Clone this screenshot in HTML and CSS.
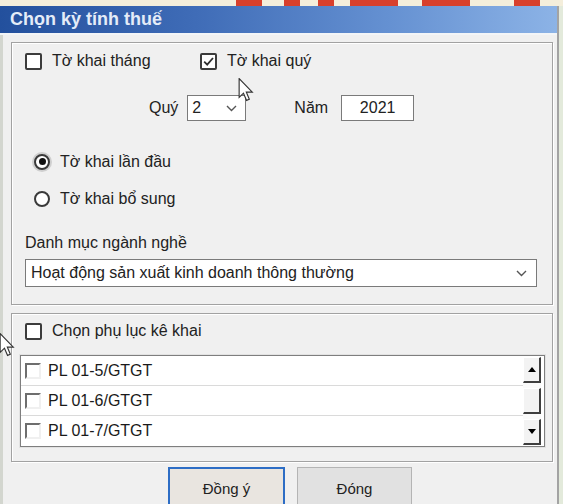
FILE: index.html
```html
<!DOCTYPE html>
<html lang="vi">
<head>
<meta charset="utf-8">
<title>Chọn kỳ tính thuế</title>
<link rel="stylesheet" href="styles.css">
</head>
<body>
<div class="backdrop"></div>
<div class="window">
  <div class="titlebar"><span class="title">Chọn kỳ tính thuế</span></div>
  <div class="client">
    <div class="group g1">
      <div class="checks">
        <label class="chk first"><span class="box"></span>Tờ khai tháng</label>
        <label class="chk"><span class="box"><svg width="13" height="13" viewBox="0 0 13 13"><path d="M2.2 6.6 L5.2 9.6 L11 3" fill="none" stroke="#2f2f2f" stroke-width="1.8"/></svg></span>Tờ khai quý</label>
      </div>
      <div class="period">
        <span class="lbl-quy">Quý</span>
        <div class="combo small"><span class="combo-text">2</span><svg class="chev" width="11" height="7" viewBox="0 0 11 7"><path d="M1 1 L5.5 5.5 L10 1" fill="none" stroke="#555" stroke-width="1.4"/></svg></div>
        <span class="lbl-nam">Năm</span>
        <div class="textbox">2021</div>
      </div>
      <div class="radio sel"><span class="circle"><span class="dot"></span></span>Tờ khai lần đầu</div>
      <div class="radio second"><span class="circle"></span>Tờ khai bổ sung</div>
      <div class="field-label">Danh mục ngành nghề</div>
      <div class="combo wide"><span class="combo-text">Hoạt động sản xuất kinh doanh thông thường</span><svg class="chev" width="11" height="7" viewBox="0 0 11 7"><path d="M1 1 L5.5 5.5 L10 1" fill="none" stroke="#555" stroke-width="1.4"/></svg></div>
    </div>
    <div class="group g2">
      <label class="chk"><span class="box"></span>Chọn phụ lục kê khai</label>
      <div class="list">
        <div class="rows">
          <div class="row"><span class="oldbox"></span>PL 01-5/GTGT</div>
          <div class="row"><span class="oldbox"></span>PL 01-6/GTGT</div>
          <div class="row last"><span class="oldbox"></span>PL 01-7/GTGT</div>
        </div>
        <div class="sb">
          <div class="sbbtn"><span class="tri-up"></span></div>
          <div class="sbbtn thumb"></div>
          <div class="sbbtn"><span class="tri-down"></span></div>
        </div>
      </div>
    </div>
    <div class="buttons">
      <div class="btn default">Đồng ý</div>
      <div class="btn">Đóng</div>
    </div>
  </div>
</div>
<svg class="cursor c1" width="16" height="24" viewBox="0 0 13 21"><path d="M0.5 0.5 L0.5 17 L4.3 13.3 L7 19.6 L9.4 18.6 L6.8 12.4 L12 12.4 Z" fill="#fff" stroke="#333" stroke-width="1"/></svg>
<svg class="cursor c2" width="16" height="24" viewBox="0 0 13 21"><path d="M0.5 0.5 L0.5 17 L4.3 13.3 L7 19.6 L9.4 18.6 L6.8 12.4 L12 12.4 Z" fill="#fff" stroke="#333" stroke-width="1"/></svg>
</body>
</html>
```
FILE: styles.css
```css
html, body {
  margin: 0;
  padding: 0;
}
body {
  width: 563px;
  height: 504px;
  overflow: hidden;
  position: relative;
  background: #e3eadb;
  font-family: "Liberation Sans", Arial, sans-serif;
  font-size: 16px;
  color: #222;
}
.backdrop {
  height: 6px;
  background: linear-gradient(to right,
    #f4eedb 0 236px, #d8402c 236px 262px, #f4eedb 262px 284px,
    #d8402c 284px 300px, #f4eedb 300px 318px, #d8402c 318px 334px,
    #f4eedb 334px 350px, #d8402c 350px 398px, #f4eedb 398px 422px,
    #d8402c 422px 470px, #f4eedb 470px 514px, #d8402c 514px 540px,
    #f4eedb 540px);
}
.window {
  width: 559px;
  height: 498px;
  box-sizing: border-box;
  border-left: 3px solid #d3d6cf;
  border-right: 2px solid #a3a3a3;
  background: #f0f0f0;
}
.titlebar {
  height: 27px;
  margin-left: -3px;
  padding-left: 10px;
  display: flex;
  align-items: center;
  background: linear-gradient(to right, #23509d 0%, #3f6cb7 35%, #6591d2 70%, #8cb3e6 100%);
  border-bottom: 2px solid #f3f5f7;
}
.title {
  font-weight: bold;
  font-size: 18px;
  color: #e4ecf8;
}
.client {
  padding: 7px 4px 0 8px;
}
.group {
  box-sizing: border-box;
  border: 1px solid #a2a2a2;
  box-shadow: inset 1px 1px 0 #ffffff, 1px 1px 0 #ffffff;
}
.g1 {
  height: 263px;
  padding: 9px 0 0 13px;
}
.checks {
  display: flex;
  align-items: center;
  height: 18px;
}
.chk {
  display: flex;
  align-items: center;
  gap: 10px;
  height: 18px;
}
.chk.first {
  width: 175px;
}
.box {
  width: 17px;
  height: 17px;
  box-sizing: border-box;
  border: 2px solid #3c3c3c;
  border-radius: 2px;
  background: #fff;
  display: flex;
  align-items: center;
  justify-content: center;
}
.period {
  display: flex;
  align-items: center;
  margin-top: 25px;
  height: 26px;
  padding-left: 124px;
}
.lbl-quy {
  margin-right: 9px;
}
.lbl-nam {
  margin-left: 48px;
  margin-right: 13px;
}
.combo {
  box-sizing: border-box;
  background: #fff;
  border: 1px solid #7a7a7a;
  display: flex;
  align-items: center;
  justify-content: space-between;
  padding: 0 8px 0 4px;
}
.combo.small {
  width: 59px;
  height: 26px;
}
.combo.wide {
  width: 512px;
  height: 28px;
  margin-top: 7px;
  padding-left: 5px;
  padding-right: 9px;
}
.textbox {
  box-sizing: border-box;
  width: 73px;
  height: 26px;
  background: #fff;
  border: 1px solid #7a7a7a;
  display: flex;
  align-items: center;
  justify-content: center;
}
.radio {
  display: flex;
  align-items: center;
  gap: 10px;
  height: 17px;
  padding-left: 9px;
  margin-top: 32px;
}
.radio.second {
  margin-top: 20px;
}
.circle {
  width: 16px;
  height: 16px;
  box-sizing: border-box;
  border: 2px solid #3a3a3a;
  border-radius: 50%;
  background: #fff;
  display: flex;
  align-items: center;
  justify-content: center;
}
.radio.sel .circle {
  box-shadow: 0 0 0 2px #cfcfcf;
}
.dot {
  width: 7px;
  height: 7px;
  border-radius: 50%;
  background: #111;
}
.field-label {
  margin-top: 27px;
  height: 18px;
  line-height: 18px;
}
.g2 {
  height: 149px;
  margin-top: 8px;
  padding: 8px 0 0 13px;
}
.list {
  box-sizing: border-box;
  width: 525px;
  height: 92px;
  margin-top: 15px;
  margin-left: -5px;
  border: 1px solid #7e7e7e;
  box-shadow: 0 0 0 1px #e2e2e2;
  background: #fff;
  display: flex;
}
.rows {
  flex: 1;
}
.row {
  height: 30px;
  box-sizing: border-box;
  border-bottom: 1px solid #dadada;
  display: flex;
  align-items: center;
  gap: 7px;
  padding-left: 4px;
  color: #1a1a1a;
  font-size: 16px;
}
.row.last {
  border-bottom: none;
}
.oldbox {
  width: 16px;
  height: 16px;
  box-sizing: border-box;
  border: 2px solid;
  border-color: #6e6e6e #f0f0f0 #f0f0f0 #6e6e6e;
  background: #fff;
}
.sb {
  width: 18px;
  margin: 1px 3px 1px 0;
  display: flex;
  flex-direction: column;
  justify-content: space-between;
  background: #fafafa;
}
.sbbtn {
  height: 26px;
  box-sizing: border-box;
  background: #f3f3f3;
  border-right: 2px solid #3e3e3e;
  border-bottom: 2px solid #3e3e3e;
  border-top: 1px solid #ffffff;
  border-left: 1px solid #ffffff;
  display: flex;
  align-items: center;
  justify-content: center;
}
.tri-up {
  width: 0;
  height: 0;
  border-left: 4px solid transparent;
  border-right: 4px solid transparent;
  border-bottom: 5px solid #000;
}
.tri-down {
  width: 0;
  height: 0;
  border-left: 4px solid transparent;
  border-right: 4px solid transparent;
  border-top: 5px solid #000;
}
.buttons {
  display: flex;
  gap: 12px;
  margin-top: 5px;
  padding-left: 157px;
}
.btn {
  box-sizing: border-box;
  width: 115px;
  height: 42px;
  background: #e1e1e1;
  border: 1px solid #b4b4b4;
  display: flex;
  align-items: center;
  justify-content: center;
  font-size: 15px;
  color: #222;
}
.btn.default {
  width: 117px;
  border: 2px solid #2d6dc5;
  background: #e9e5e0;
}
.cursor {
  position: absolute;
}
.c1 {
  left: 238px;
  top: 78px;
}
.c2 {
  left: -1px;
  top: 333px;
}
```
